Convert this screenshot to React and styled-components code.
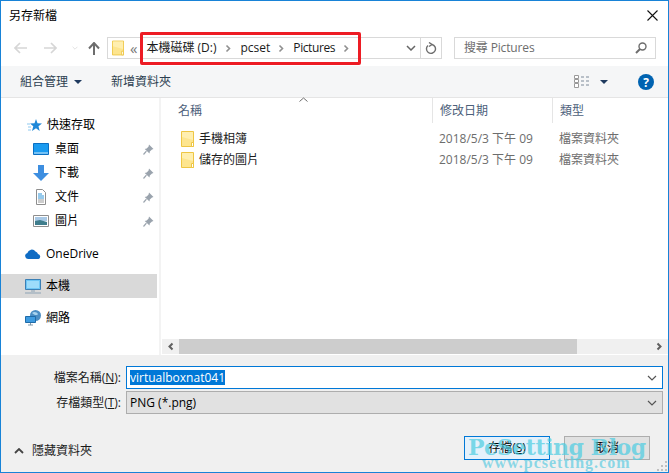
import React from "react";
import styled, { createGlobalStyle } from "styled-components";

const Global = createGlobalStyle`
  html, body { margin: 0; padding: 0; background: #fff; }
  * { box-sizing: border-box; }
  #root { width: 669px; height: 473px; }
`;
const FONT = `"Open Sans", "Noto Sans CJK TC", sans-serif`;

const Window = styled.div`
  position: relative; width: 669px; height: 473px; overflow: hidden;
  display: flex; flex-direction: column; background: #fff;
  border: 1px solid #1883d7; font: 12px/16px ${FONT}; color: #000;
`;
const TitleBar = styled.div`
  height: 29px; flex: none; display: flex; align-items: center; justify-content: space-between;
  padding: 0 10px 0 8px;
`;
const AddressRow = styled.div`
  height: 36px; flex: none; display: flex; align-items: center; padding: 0 13px 0 13px;
`;
const NavSlot = styled.span`
  width: ${p => p.$w}px; flex: none; display: flex; align-items: center;
`;
const AddressBox = styled.div`
  width: 335px; height: 22px; flex: none; margin-left: 6px; display: flex; align-items: center;
  border: 1px solid #d9d9d9; padding-left: 4px;
`;
const Crumb = styled.span`
  color: #1a1a1a; flex: none; margin-right: ${p => p.$mr || 0}px; margin-left: ${p => p.$ml || 0}px;
  letter-spacing: ${p => p.$ls || 0}px;
`;
const Overflow = styled.span`
  color: #777; flex: none; margin-left: 6px; font-size: 15px; line-height: 16px;
`;
const RefreshCell = styled.span`
  width: 21px; height: 100%; flex: none; display: flex; align-items: center; justify-content: center;
  border-left: 1px solid #d9d9d9;
`;
const Spacer = styled.span` flex: 1; `;
const SearchBox = styled.div`
  width: 202px; height: 22px; flex: none; margin-left: 12px; display: flex; align-items: center;
  justify-content: space-between; padding: 0 8px 0 9px; border: 1px solid #d9d9d9; color: #6d6d6d;
  letter-spacing: -0.15px;
`;
const Toolbar = styled.div`
  height: 32px; flex: none; display: flex; align-items: center; background: #f5f6f7;
  border-bottom: 1px solid #e5e5e5; padding: 0 14px 0 19px; color: #2c3e50;
`;
const ToolLabel = styled.span` margin-right: ${p => p.$mr || 0}px; margin-left: ${p => p.$ml || 0}px; `;
const Main = styled.div` flex: 1; min-height: 0; display: flex; `;
const Sidebar = styled.div`
  width: 160px; flex: none; padding: 15px 2px 0 0; border-right: 2px solid #f3f3f3;
  display: flex; flex-direction: column;
`;
const NavRow = styled.div`
  height: 24px; flex: none; display: flex; align-items: center; margin-top: ${p => p.$mt || 0}px;
  padding-left: ${p => p.$pl}px; background: ${p => (p.$active ? "#d9d9d9" : "transparent")};
`;
const NavText = styled.span` margin-left: ${p => p.$ml}px; flex: 1; `;
const Content = styled.div` flex: 1; min-width: 0; display: flex; flex-direction: column; padding-left: 1px; padding-bottom: 1px;`;
const Header = styled.div`
  position: relative; height: 25px; flex: none; display: grid; grid-template-columns: 271px 120px 1fr;
  color: #4c607a;
`;
const HeadCell = styled.div`
  padding-left: ${p => p.$pl}px; border-right: ${p => (p.$sep ? "1px solid #e5e5e5" : "none")};
  display: flex; align-items: center;
`;
const SortCaret = styled.svg` position: absolute; left: 137px; top: -1px; `;
const FileList = styled.div` flex: 1; padding-top: 5px; `;
const FileRow = styled.div`
  height: 21px; display: grid; grid-template-columns: 277px 120px 1fr; align-items: center;
`;
const NameCell = styled.div` display: flex; align-items: center; padding-left: 19px; gap: 5px; color: #1a1a1a; `;
const MetaCell = styled.div` color: #6d6d6d; `;
const ScrollBar = styled.div` height: 15px; flex: none; display: flex; background: #f0f0f0; align-items: stretch; `;
const ScrollBtn = styled.div` width: 17px; flex: none; display: flex; align-items: center; justify-content: center; `;
const ScrollThumb = styled.div` width: 398px; flex: none; background: #cdcdcd; `;
const Bottom = styled.div`
  height: 117px; flex: none; background: #f0f0f0; padding: 11px 5px 0 0; display: flex; flex-direction: column;
`;
const FieldRow = styled.div`
  display: grid; grid-template-columns: 120px 1fr; column-gap: 5px; align-items: center; margin-bottom: 2px;
`;
const FieldLabel = styled.label` text-align: right; color: #1a1a1a; `;
const Under = styled.span` text-decoration: underline; `;
const Field = styled.div`
  height: 23px; display: flex; align-items: center; justify-content: space-between;
  padding: 0 1px 0 3px; background: ${p => (p.$focus ? "#fff" : "#e1e1e1")};
  border: ${p => (p.$focus ? "1px solid #0078d7" : "1px solid #adadad")};
`;
const Selection = styled.span` background: #0078d7; color: #fff; line-height: 15px; `;
const FieldArrow = styled.span` width: 18px; display: flex; justify-content: center; flex: none; `;
const Footer = styled.div`
  display: flex; align-items: center; padding-left: 13px; margin-top: 20px; height: 24px;
`;
const HideGroup = styled.div`
  flex: 1; display: flex; align-items: center; gap: 8px; padding-top: 6px; color: #1a1a1a;
`;
const Btn = styled.div`
  width: 86px; height: 24px; display: flex; align-items: center; justify-content: center;
  margin-right: ${p => p.$mr}px; background: ${p => (p.$primary ? "#e5f1fb" : "#e1e1e1")};
  border: 1px solid ${p => (p.$primary ? "#0078d7" : "#adadad")};
  color: #000;
`;
const Highlight = styled.div`
  position: absolute; left: 139px; top: 31px; width: 221px; height: 33px;
  border: 3px solid #ed1c24; border-radius: 2px; pointer-events: none;
`;
const MarkTitle = styled.div`
  position: absolute; left: 467px; top: 432px; white-space: nowrap; pointer-events: none;
  font: bold 22px/28px "DejaVu Serif", serif; letter-spacing: -0.5px; color: rgba(80, 205, 225, 0.72);
`;
const MarkUrl = styled.div`
  position: absolute; left: 481px; top: 453px; white-space: nowrap; pointer-events: none;
  font: bold 16px/18px "Liberation Serif", serif; letter-spacing: 1px; color: rgba(120, 210, 228, 0.85);
`;
const Grip = styled.svg` position: absolute; right: 1px; bottom: 1px; `;

const Folder = ({ w = 13, h = 16 }) => (
  <svg width={w} height={h} viewBox="0 0 13 16" style={{ flex: "none" }}>
    <path d="M.5.5h12v15H.5z" fill="#fde58f" stroke="#eec644" />
    <path d="M1 1h11v8L1 6z" fill="#ffefb0" />
    <path d="M10.5 11.5h2v4h-2z" fill="#fff" stroke="#eec644" />
  </svg>
);
const Chev = ({ c = "#909090", d = "right", s = 1.6, w = 7, h = 9 }) => (
  <svg width={w} height={h} viewBox="0 0 7 9" style={{ flex: "none", transform: d === "left" ? "scaleX(-1)" : "none" }}>
    <path d="M1.5 1.500l3 3-3 3" fill="none" stroke={c} strokeWidth={s} />
  </svg>
);
const DownChev = ({ c = "#555", w = 10, h = 6, s = 1.2 }) => (
  <svg width={w} height={h} viewBox="0 0 10 6" style={{ flex: "none" }}>
    <path d="M1 1l4 4 4-4" fill="none" stroke={c} strokeWidth={s} />
  </svg>
);
const UpChev = () => (
  <svg width="10" height="6" viewBox="0 0 10 6" style={{ flex: "none" }}>
    <path d="M1 5l4-4 4 4" fill="none" stroke="#444" strokeWidth="1.800" />
  </svg>
);
const Caret = () => (
  <svg width="8" height="4" viewBox="0 0 8 4" style={{ flex: "none" }}>
    <path d="M0 0h8L4 4z" fill="#1f3a5f" />
  </svg>
);
const HArrow = ({ flip, c = "#d6d6d6" }) => (
  <svg width="13" height="12" viewBox="0 0 13 12" style={{ flex: "none", transform: flip ? "scaleX(-1)" : "none" }}>
    <path d="M6 1L1 6l5 5M1 6h12" fill="none" stroke={c} strokeWidth="1.7" />
  </svg>
);
const Pin = () => (
  <svg width="11" height="11" viewBox="0 0 11 11" style={{ flex: "none", marginRight: 3 }}>
    <path d="M6 .5l4.5 4.5-1.5.4-2.2 2.2-.3 2L1.7 4.9l2-.3L5.6 2.4z" fill="#9aa3ad" />
    <path d="M3.4 7.2L.5 10.5" stroke="#9aa3ad" strokeWidth="1.2" />
  </svg>
);
const Star = () => (
  <svg width="15" height="13" viewBox="0 0 15 13" style={{ flex: "none" }}>
    <path d="M9 0l1.500 4.200L15 4.500 11.500 7.300l1.200 4.700L9 9.300 5 12l1.300-4.700L3 4.500l4.500-.3z" fill="#1f88d8" />
    <path d="M0 5h3M1 8h3M1 11h3" stroke="#8fc9ef" strokeWidth="1" />
  </svg>
);
const Desktop = () => (
  <svg width="16" height="12" viewBox="0 0 16 12" style={{ flex: "none" }}>
    <path d="M.5.5h15v11H.5z" fill="#1a9bf0" stroke="#0a6fc2" />
    <path d="M1 10h14" stroke="#cfe8fa" />
  </svg>
);
const Download = () => (
  <svg width="16" height="16" viewBox="0 0 16 16" style={{ flex: "none" }}>
    <path d="M5 0h6v8h5l-8 8-8-8h5z" fill="#3d8ee0" />
  </svg>
);
const Doc = () => (
  <svg width="16" height="16" viewBox="0 0 16 16" style={{ flex: "none" }}>
    <path d="M3.500.5h6l3 3v12h-9z" fill="#fff" stroke="#8e8e8e" />
    <path d="M5 5h4M5 7h6M5 9h6" stroke="#2e95d9" />
    <path d="M5 11h6M5 13h6" stroke="#9a9a9a" />
  </svg>
);
const Pic = () => (
  <svg width="16" height="12" viewBox="0 0 16 12" style={{ flex: "none" }}>
    <path d="M.5.500h15v11H.5z" fill="#fff" stroke="#8e8e8e" />
    <path d="M2 2h12v4H2z" fill="#a9c9e6" />
    <path d="M2 6l5-1 7 2v3H2z" fill="#3f7d8c" />
  </svg>
);
const Cloud = () => (
  <svg width="16" height="10" viewBox="0 0 16 10" style={{ flex: "none" }}>
    <path d="M3 10a3 3 0 0 1-.6-5.900A4.500 4.500 0 0 1 10.500 2.500 3.800 3.800 0 0 1 13 5a2.600 2.600 0 0 1 .5 5z" fill="#0f6cc4" />
  </svg>
);
const Monitor = () => (
  <svg width="16" height="15" viewBox="0 0 16 15" style={{ flex: "none" }}>
    <path d="M.5.500h15v10H.5z" fill="#6dc6f5" stroke="#3b7fb5" />
    <path d="M2 2h12v7H2z" fill="#9ddcfb" />
    <path d="M6 12h4" stroke="#8da3b5" />
    <path d="M0 14h16" stroke="#8da3b5" />
  </svg>
);
const Network = () => (
  <svg width="16" height="16" viewBox="0 0 16 16" style={{ flex: "none" }}>
    <circle cx="10.500" cy="5.500" r="5.500" fill="#4b8ec4" />
    <path d="M7 3c2-2 5-1 6 1-1 2-4 1-6-1z" fill="#a9d4ef" />
    <path d="M.5 6.500h10v6H.5z" fill="#3e9be0" stroke="#1f6ba8" />
    <path d="M3 15h5M5.500 13v2" stroke="#7f98aa" />
  </svg>
);

const NavItem = ({ icon, label, pin, pl, ml, mt, active }) => (
  <NavRow $pl={pl} $mt={mt} $active={active}>
    {icon}
    <NavText $ml={ml}>{label}</NavText>
    {pin && <Pin />}
  </NavRow>
);

const File = ({ name }) => (
  <FileRow>
    <NameCell><Folder w={13} h={16} />{name}</NameCell>
    <MetaCell>2018/5/3 下午 09</MetaCell>
    <MetaCell>檔案資料夾</MetaCell>
  </FileRow>
);

export default function App() {
  return (
    <>
      <Global />
      <Window>
        <TitleBar>
          <span>另存新檔</span>
          <svg width="11" height="11" viewBox="0 0 11 11"><path d="M.5.5l10 10M10.500.5l-10 10" stroke="#111" strokeWidth="1.100" /></svg>
        </TitleBar>
        <AddressRow>
          <NavSlot $w={30}><HArrow /></NavSlot>
          <NavSlot $w={28}><HArrow flip /></NavSlot>
          <NavSlot $w={16}><DownChev c="#d6d6d6" w={6} h={4} /></NavSlot>
          <NavSlot $w={13}>
            <svg width="12" height="13" viewBox="0 0 12 13"><path d="M1 6.500L6 1l5 5.500M6 1v12" fill="none" stroke="#6d6d6d" strokeWidth="2" /></svg>
          </NavSlot>
          <AddressBox>
            <Folder w={12} h={16} />
            <Overflow>«</Overflow>
            <Crumb $ml={9} $mr={8}>本機磁碟 (D:)</Crumb>
            <Chev />
            <Crumb $ml={9} $mr={8}>pcset</Crumb>
            <Chev />
            <Crumb $ml={8} $mr={8} $ls={-0.4}>Pictures</Crumb>
            <Chev />
            <Spacer />
            <FieldArrow><DownChev c="#666" s={1.500} /></FieldArrow>
            <RefreshCell>
              <svg width="12" height="13" viewBox="0 0 12 13"><path d="M7 2.500A4.500 4.500 0 1 1 3 3.500M4 .5l3 2-3 2" fill="none" stroke="#6d6d6d" strokeWidth="1.400" /></svg>
            </RefreshCell>
          </AddressBox>
          <SearchBox>
            <span>搜尋 Pictures</span>
            <svg width="12" height="12" viewBox="0 0 12 12"><circle cx="7.500" cy="4.500" r="3.500" fill="none" stroke="#6d6d6d" strokeWidth="1.400" /><path d="M5 7l-4 4" stroke="#6d6d6d" strokeWidth="2" /></svg>
          </SearchBox>
        </AddressRow>
        <Toolbar>
          <ToolLabel $mr={6}>組合管理</ToolLabel>
          <Caret />
          <ToolLabel $ml={29}>新增資料夾</ToolLabel>
          <Spacer />
          <svg width="16" height="13" viewBox="0 0 16 13" style={{ marginRight: 10 }}>
            <path d="M.5.500h4v3h-4zM.5 4.500h4v3h-4zM.5 8.500h4v4h-4z" fill="#fff" stroke="#9a9a9a" />
            <path d="M7 2h3M12 2h3M7 6h3M12 6h3M7 10h3M12 10h3" stroke="#7d8a99" />
          </svg>
          <Caret />
          <svg width="16" height="16" viewBox="0 0 16 16" style={{ marginLeft: 30 }}>
            <circle cx="8" cy="8" r="8" fill="#0063b1" />
            <text x="8" y="12.500" textAnchor="middle" fontSize="12" fontWeight="700" fill="#fff" fontFamily="Open Sans">?</text>
          </svg>
        </Toolbar>
        <Main>
          <Sidebar>
            <NavItem pl={26} ml={5} icon={<Star />} label="快速存取" />
            <NavItem pl={32} ml={6} icon={<Desktop />} label="桌面" pin />
            <NavItem pl={32} ml={6} icon={<Download />} label="下載" pin />
            <NavItem pl={32} ml={6} icon={<Doc />} label="文件" pin />
            <NavItem pl={32} ml={6} icon={<Pic />} label="圖片" pin />
            <NavItem pl={24} ml={5} mt={9} icon={<Cloud />} label="OneDrive" />
            <NavItem pl={24} ml={5} mt={8} active icon={<Monitor />} label="本機" />
            <NavItem pl={24} ml={5} mt={8} icon={<Network />} label="網路" />
          </Sidebar>
          <Content>
            <Header>
              <HeadCell $pl={16} $sep>名稱</HeadCell>
              <HeadCell $pl={7} $sep>修改日期</HeadCell>
              <HeadCell $pl={7}>類型</HeadCell>
              <SortCaret width="9" height="5" viewBox="0 0 9 5"><path d="M.5 4.500l4-3.500 4 3.500" fill="none" stroke="#6d6d6d" /></SortCaret>
            </Header>
            <FileList>
              <File name="手機相簿" />
              <File name="儲存的圖片" />
            </FileList>
            <ScrollBar>
              <ScrollBtn><Chev c="#606060" d="left" s={2} /></ScrollBtn>
              <ScrollThumb />
              <Spacer />
              <ScrollBtn><Chev c="#606060" s={2} /></ScrollBtn>
            </ScrollBar>
          </Content>
        </Main>
        <Bottom>
          <FieldRow>
            <FieldLabel>檔案名稱(<Under>N</Under>):</FieldLabel>
            <Field $focus>
              <Selection>virtualboxnat041</Selection>
              <FieldArrow><DownChev /></FieldArrow>
            </Field>
          </FieldRow>
          <FieldRow>
            <FieldLabel>存檔類型(<Under>T</Under>):</FieldLabel>
            <Field>
              <span>PNG (*.png)</span>
              <FieldArrow><DownChev /></FieldArrow>
            </Field>
          </FieldRow>
          <Footer>
            <HideGroup>
              <UpChev />
              <span>隱藏資料夾</span>
            </HideGroup>
            <Btn $primary $mr={14}>存檔(<Under>S</Under>)</Btn>
            <Btn $mr={13}>取消</Btn>
          </Footer>
        </Bottom>
        <Highlight />
        <MarkTitle>PcSetting Blog</MarkTitle>
        <MarkUrl>www.pcsetting.com</MarkUrl>
        <Grip width="10" height="10" viewBox="0 0 10 10">
          <path d="M8 0h2v2H8zM4 4h2v2H4zM8 4h2v2H8zM0 8h2v2H0zM4 8h2v2H4zM8 8h2v2H8z" fill="#c0c0c0" />
        </Grip>
      </Window>
    </>
  );
}
